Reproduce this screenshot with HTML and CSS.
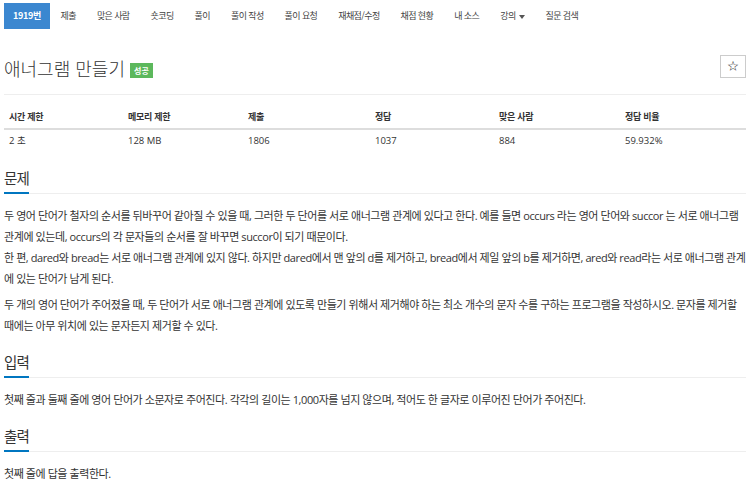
FILE: index.html
```html
<!DOCTYPE html>
<html lang="ko">
<head>
    <meta charset="UTF-8">
    <meta name="viewport" content="width=device-width, initial-scale=1.0">
    <title>1919번: 애너그램 만들기</title>
    <link rel="stylesheet" href="styles.css">
</head>
<body>

    <!-- Problem menu -->
    <ul class="problem-menu">
        <li class="active"><a href="#">1919번</a></li>
        <li><a href="#">제출</a></li>
        <li><a href="#">맞은 사람</a></li>
        <li><a href="#">숏코딩</a></li>
        <li><a href="#">풀이</a></li>
        <li><a href="#">풀이 작성</a></li>
        <li><a href="#">풀이 요청</a></li>
        <li><a href="#">재채점/수정</a></li>
        <li><a href="#">채점 현황</a></li>
        <li><a href="#">내 소스</a></li>
        <li><a href="#">강의<span class="caret"></span></a></li>
        <li><a href="#">질문 검색</a></li>
    </ul>

    <!-- Title -->
    <div class="page-header">
        <h1><span id="problem_title">애너그램 만들기</span> <span class="label-success">성공</span></h1>
        <button class="star-btn">☆</button>
    </div>

    <!-- Problem info -->
    <table id="problem-info">
        <thead>
            <tr>
                <th class="c1">시간 제한</th>
                <th class="c2">메모리 제한</th>
                <th class="c3">제출</th>
                <th class="c4">정답</th>
                <th class="c5">맞은 사람</th>
                <th>정답 비율</th>
            </tr>
        </thead>
        <tbody>
            <tr>
                <td>2 초</td>
                <td>128 MB</td>
                <td>1806</td>
                <td>1037</td>
                <td>884</td>
                <td>59.932%</td>
            </tr>
        </tbody>
    </table>

    <!-- Description -->
    <section class="problem-section">
        <div class="headline"><h2>문제</h2></div>
        <p>두 영어 단어가 철자의 순서를 뒤바꾸어 같아질 수 있을 때, 그러한 두 단어를 서로 애너그램 관계에 있다고 한다. 예를 들면 occurs 라는 영어 단어와 succor 는 서로 애너그램 관계에 있는데, occurs의 각 문자들의 순서를 잘 바꾸면 succor이 되기 때문이다.<br>한 편, dared와 bread는 서로 애너그램 관계에 있지 않다. 하지만 dared에서 맨 앞의 d를 제거하고, bread에서 제일 앞의 b를 제거하면, ared와 read라는 서로 애너그램 관계에 있는 단어가 남게 된다.</p>
        <p>두 개의 영어 단어가 주어졌을 때, 두 단어가 서로 애너그램 관계에 있도록 만들기 위해서 제거해야 하는 최소 개수의 문자 수를 구하는 프로그램을 작성하시오. 문자를 제거할 때에는 아무 위치에 있는 문자든지 제거할 수 있다.</p>
    </section>

    <section class="problem-section">
        <div class="headline"><h2>입력</h2></div>
        <p>첫째 줄과 둘째 줄에 영어 단어가 소문자로 주어진다. 각각의 길이는 1,000자를 넘지 않으며, 적어도 한 글자로 이루어진 단어가 주어진다.</p>
    </section>

    <section class="problem-section">
        <div class="headline"><h2>출력</h2></div>
        <p>첫째 줄에 답을 출력한다.</p>
    </section>

</body>
</html>
```

FILE: styles.css
```css
/* General Styles */
body {
    font-family: "Open Sans", "Noto Sans CJK KR", sans-serif;
    margin: 0;
    padding: 0 4px;
    background: #ffffff;
    color: #333333;
    font-size: 11px;
}

/* Problem menu */
.problem-menu {
    list-style: none;
    display: flex;
    margin: 0;
    padding: 3px 0 0 0;
}

.problem-menu li a {
    display: block;
    padding: 0 10.5px;
    height: 26px;
    line-height: 26px;
    color: #444444;
    text-decoration: none;
    font-size: 9px;
    letter-spacing: -0.6px;
    font-family: "Noto Sans CJK KR", sans-serif;
}

.problem-menu li.active a {
    background: #3b87d0;
    color: #ffffff;
    padding: 0 9px;
    font-weight: bold;
    letter-spacing: -0.3px;
}

.caret {
    display: inline-block;
    width: 0;
    height: 0;
    margin-left: 3px;
    vertical-align: middle;
    border-top: 4px solid #555;
    border-left: 3px solid transparent;
    border-right: 3px solid transparent;
}

/* Title */
.page-header {
    display: flex;
    align-items: center;
    justify-content: space-between;
    margin-top: 27px;
    padding-bottom: 14px;
    border-bottom: 1px solid #eeeeee;
}

.page-header h1 {
    margin: 0;
    font-size: 18px;
    font-weight: 300;
    font-family: "Noto Sans CJK KR", sans-serif;
    line-height: 24px;
}

.label-success {
    display: inline-block;
    background: #5cb85c;
    color: #ffffff;
    font-size: 8px;
    font-weight: bold;
    padding: 2px 4px;
    line-height: 11px;
    vertical-align: middle;
    position: relative;
    top: -1px;
}

.star-btn {
    width: 26px;
    height: 23px;
    background: #ffffff;
    border: 1px solid #cccccc;
    font-size: 12px;
    color: #333;
    padding: 0;
    cursor: pointer;
    margin-top: -3px;
}

/* Problem info */
#problem-info {
    width: 100%;
    table-layout: fixed;
    border-collapse: collapse;
    margin: 11px 0 5px 0;
    font-size: 9.5px;
}

#problem-info .c1 { width: 109px; }
#problem-info .c2 { width: 110px; }
#problem-info .c3 { width: 117px; }
#problem-info .c4 { width: 114px; }
#problem-info .c5 { width: 116px; }

#problem-info th,
#problem-info td {
    text-align: left;
    padding: 5px 5px;
    line-height: 12px;
}

#problem-info th {
    font-weight: bold;
    font-size: 9px;
    letter-spacing: -0.3px;
    font-family: "Noto Sans CJK KR", sans-serif;
    border-bottom: 2px solid #dddddd;
}

/* Problem sections */
.problem-section {
    margin-top: 15px;
}

.headline {
    border-bottom: 1px solid #eeeeee;
}

.headline h2 {
    display: inline-block;
    margin: 0 0 -1px 0;
    font-size: 14.5px;
    letter-spacing: -0.8px;
    font-weight: 400;
    font-family: "Noto Sans CJK KR", sans-serif;
    line-height: 22px;
    padding-bottom: 3px;
    border-bottom: 2px solid #0076c0;
}

.problem-section p {
    margin: 11px 0 0 0;
    line-height: 21px;
    letter-spacing: -0.42px;
}

.problem-section p + p {
    margin-top: 5px;
}
```
